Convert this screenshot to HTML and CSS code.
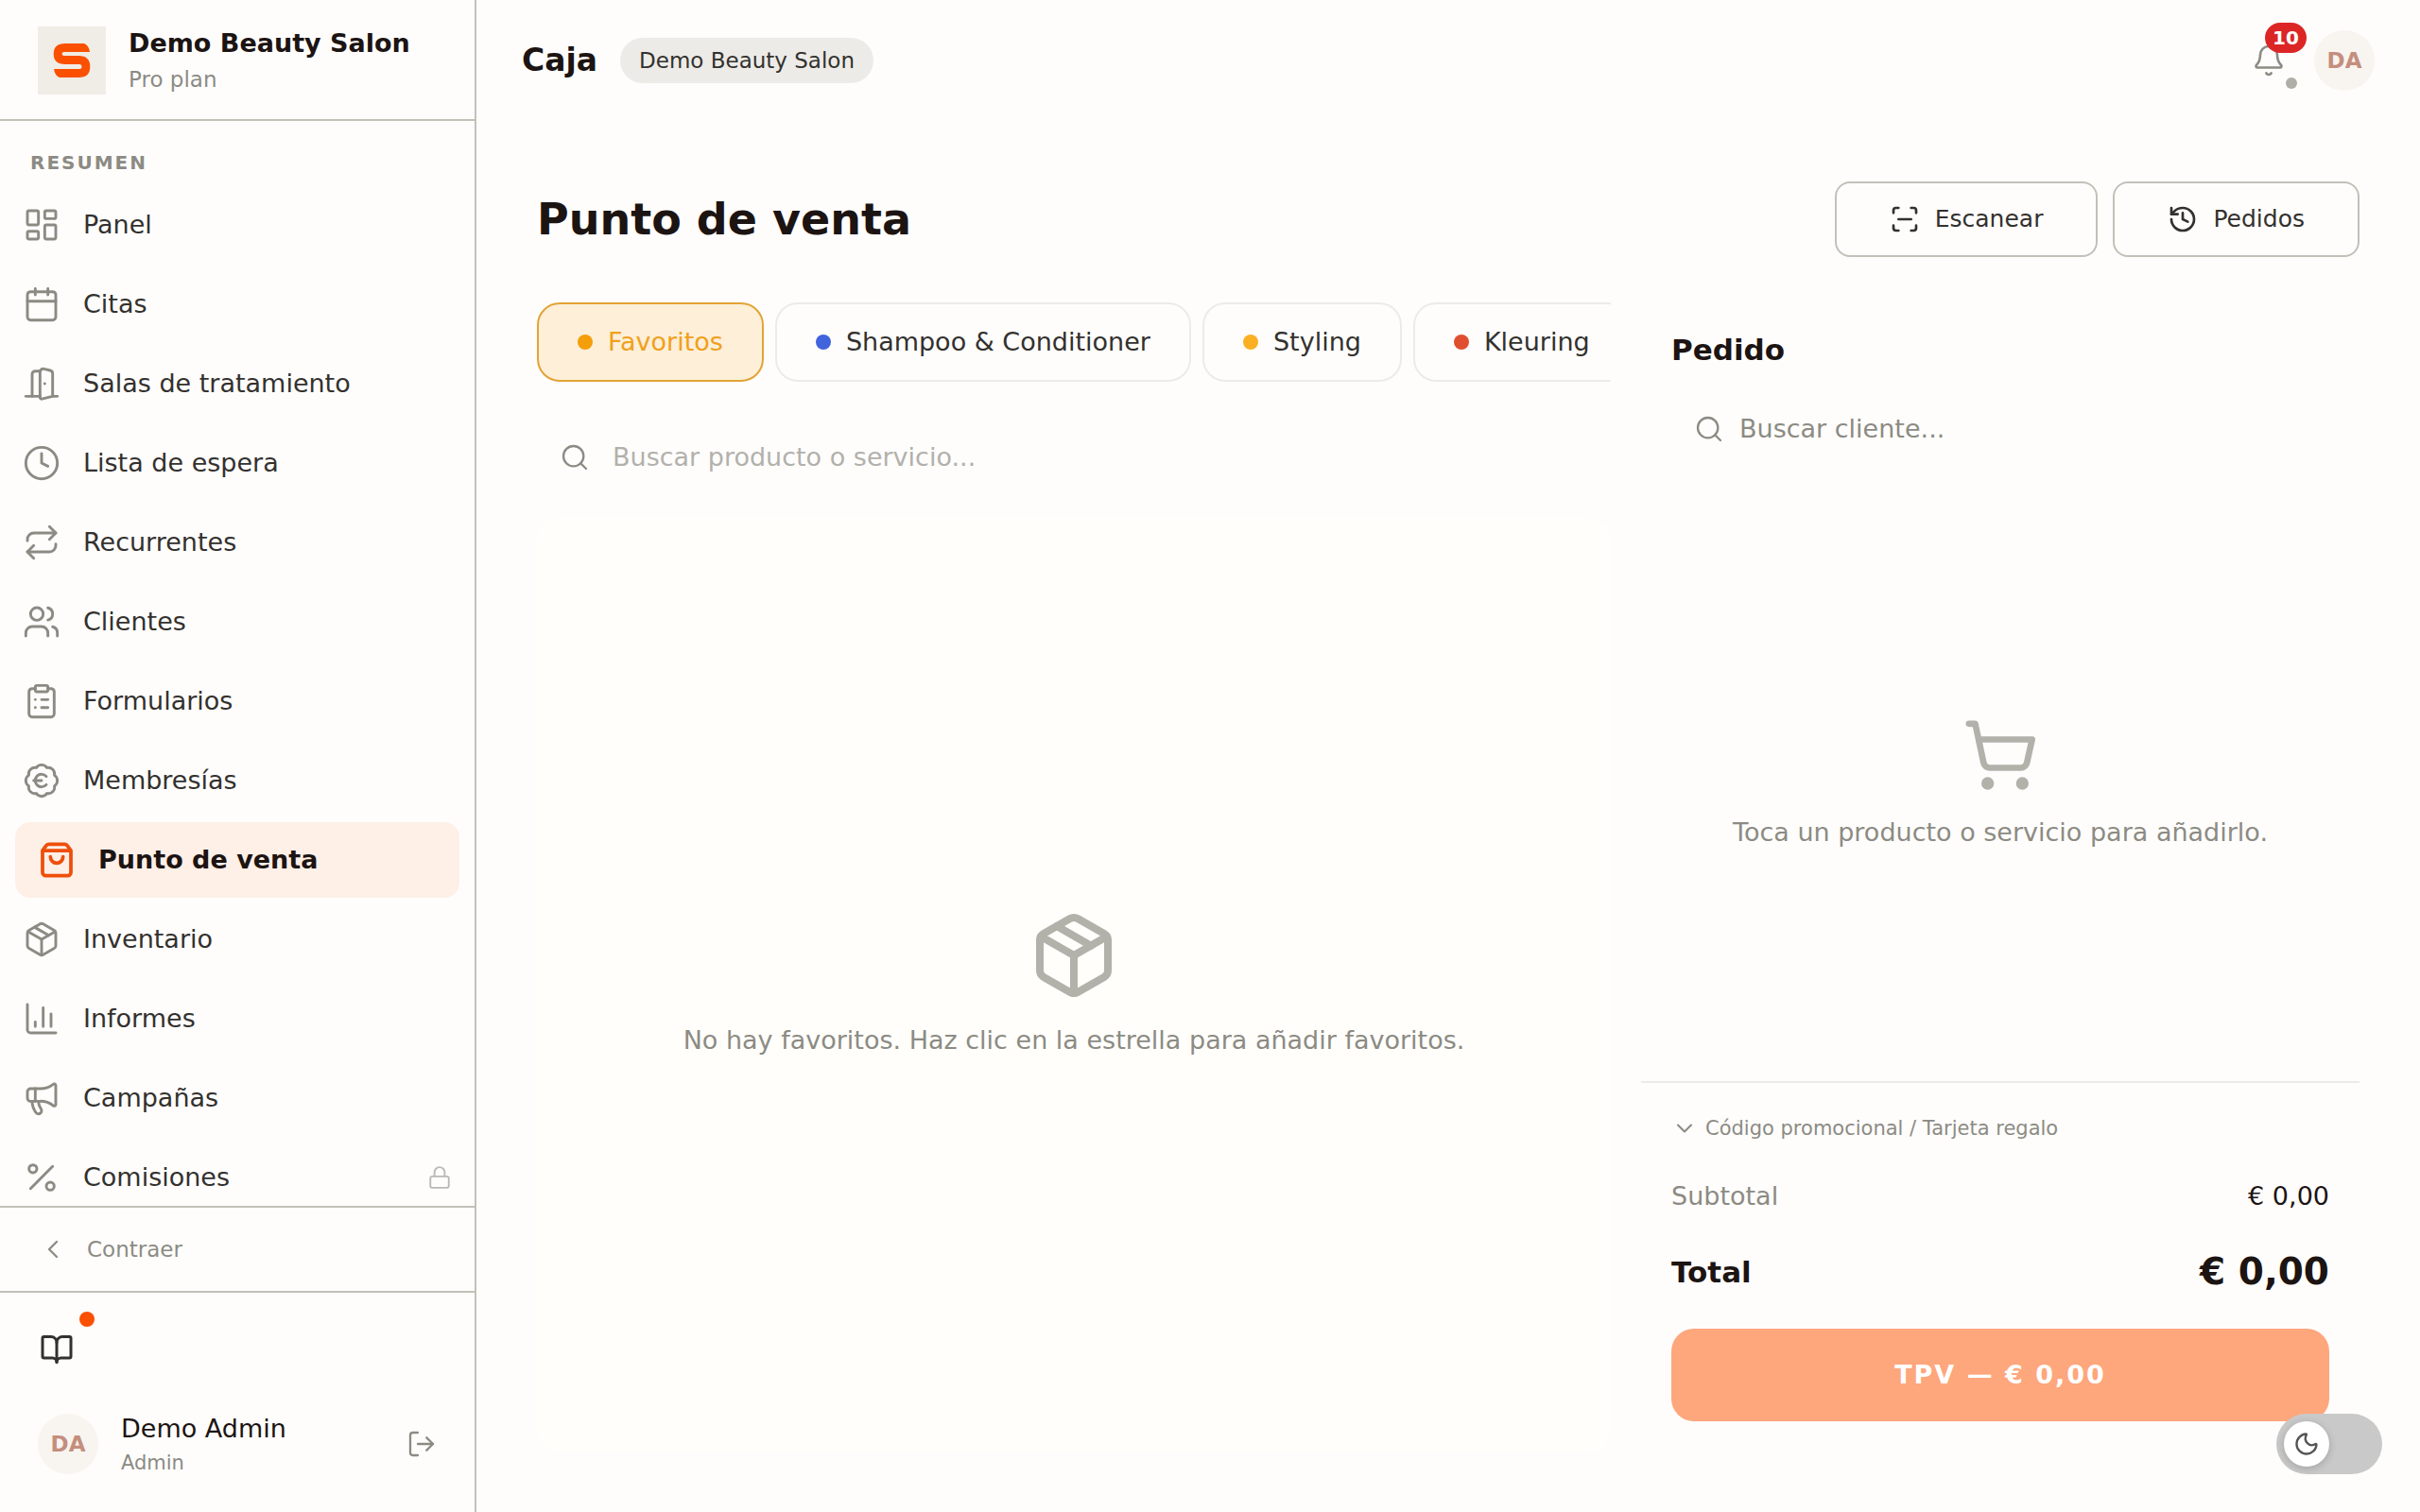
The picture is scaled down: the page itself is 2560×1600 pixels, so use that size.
FILE: index.html
```html
<!DOCTYPE html>
<html lang="es">
<head>
    <meta charset="UTF-8">
    <meta name="viewport" content="width=device-width, initial-scale=1.0">
    <title>Caja - Demo Beauty Salon</title>
    <link rel="stylesheet" href="styles.css">
</head>
<body>
    <aside class="sidebar">
        <div class="brand">
            <svg class="brand-logo" viewBox="0 0 72 72" aria-hidden="true">
                <rect width="72" height="72" fill="#f0ede6"/>
                <path fill="#fa5000" d="M29 18H49Q54 20 55 27H28Q25.500 27 25.500 29T28 31H43Q55.300 31 55.300 42.500T43 54H23Q18 52 17 45H44Q46.500 45 46.500 42.500T44 40H29Q16.700 40 16.700 29T29 18Z"/>
            </svg>
            <div>
                <div class="brand-name">Demo Beauty Salon</div>
                <div class="brand-plan">Pro plan</div>
            </div>
        </div>

        <nav class="nav">
            <h2 class="nav-heading">Resumen</h2>
            <ul class="nav-list">
                <li><a class="nav-item" href="#">
                    <svg class="icon" viewBox="0 0 24 24"><rect width="7" height="9" x="3" y="3" rx="1"/><rect width="7" height="5" x="14" y="3" rx="1"/><rect width="7" height="9" x="14" y="12" rx="1"/><rect width="7" height="5" x="3" y="16" rx="1"/></svg>
                    <span>Panel</span>
                </a></li>
                <li><a class="nav-item" href="#">
                    <svg class="icon" viewBox="0 0 24 24"><path d="M8 2v4M16 2v4M3 10h18"/><rect width="18" height="18" x="3" y="4" rx="2"/></svg>
                    <span>Citas</span>
                </a></li>
                <li><a class="nav-item" href="#">
                    <svg class="icon" viewBox="0 0 24 24"><path d="M11 20H2"/><path d="M11 4.562v16.157a1 1 0 0 0 1.242.97L19 20V5.562a2 2 0 0 0-1.515-1.94l-4-1A2 2 0 0 0 11 4.561z"/><path d="M11 4H8a2 2 0 0 0-2 2v14"/><path d="M14 12h.01"/><path d="M22 20h-3"/></svg>
                    <span>Salas de tratamiento</span>
                </a></li>
                <li><a class="nav-item" href="#">
                    <svg class="icon" viewBox="0 0 24 24"><circle cx="12" cy="12" r="10"/><path d="M12 6v6l4 2"/></svg>
                    <span>Lista de espera</span>
                </a></li>
                <li><a class="nav-item" href="#">
                    <svg class="icon" viewBox="0 0 24 24"><path d="m17 2 4 4-4 4"/><path d="M3 11v-1a4 4 0 0 1 4-4h14"/><path d="m7 22-4-4 4-4"/><path d="M21 13v1a4 4 0 0 1-4 4H3"/></svg>
                    <span>Recurrentes</span>
                </a></li>
                <li><a class="nav-item" href="#">
                    <svg class="icon" viewBox="0 0 24 24"><path d="M16 21v-2a4 4 0 0 0-4-4H6a4 4 0 0 0-4 4v2"/><path d="M16 3.128a4 4 0 0 1 0 7.744"/><path d="M22 21v-2a4 4 0 0 0-3-3.87"/><circle cx="9" cy="7" r="4"/></svg>
                    <span>Clientes</span>
                </a></li>
                <li><a class="nav-item" href="#">
                    <svg class="icon" viewBox="0 0 24 24"><rect width="8" height="4" x="8" y="2" rx="1"/><path d="M16 4h2a2 2 0 0 1 2 2v14a2 2 0 0 1-2 2H6a2 2 0 0 1-2-2V6a2 2 0 0 1 2-2h2"/><path d="M12 11h4M12 16h4M8 11h.01M8 16h.01"/></svg>
                    <span>Formularios</span>
                </a></li>
                <li><a class="nav-item" href="#">
                    <svg class="icon" viewBox="0 0 24 24"><path d="M3.85 8.62a4 4 0 0 1 4.78-4.77 4 4 0 0 1 6.74 0 4 4 0 0 1 4.78 4.78 4 4 0 0 1 0 6.74 4 4 0 0 1-4.77 4.78 4 4 0 0 1-6.75 0 4 4 0 0 1-4.78-4.77 4 4 0 0 1 0-6.76Z"/><path d="M7 12h5"/><path d="M15 9.400a4 4 0 1 0 0 5.200"/></svg>
                    <span>Membresías</span>
                </a></li>
                <li><a class="nav-item active" href="#" aria-current="page">
                    <svg class="icon" viewBox="0 0 24 24"><path d="M16 10a4 4 0 0 1-8 0"/><path d="M3.103 6.034h17.794"/><path d="M3.400 5.467a2 2 0 0 0-.4 1.200V20a2 2 0 0 0 2 2h14a2 2 0 0 0 2-2V6.667a2 2 0 0 0-.4-1.200l-2-2.667A2 2 0 0 0 17 2H7a2 2 0 0 0-1.600.800z"/></svg>
                    <span>Punto de venta</span>
                </a></li>
                <li><a class="nav-item" href="#">
                    <svg class="icon" viewBox="0 0 24 24"><path d="M11 21.730a2 2 0 0 0 2 0l7-4A2 2 0 0 0 21 16V8a2 2 0 0 0-1-1.730l-7-4a2 2 0 0 0-2 0l-7 4A2 2 0 0 0 3 8v8a2 2 0 0 0 1 1.730z"/><path d="M12 22V12"/><path d="M3.290 7 12 12l8.710-5"/><path d="m7.500 4.270 9 5.150"/></svg>
                    <span>Inventario</span>
                </a></li>
                <li><a class="nav-item" href="#">
                    <svg class="icon" viewBox="0 0 24 24"><path d="M3 3v16a2 2 0 0 0 2 2h16"/><path d="M18 17V9M13 17V5M8 17v-3"/></svg>
                    <span>Informes</span>
                </a></li>
                <li><a class="nav-item" href="#">
                    <svg class="icon" viewBox="0 0 24 24"><path d="M11 6a13 13 0 0 0 8.400-2.800A1 1 0 0 1 21 4v12a1 1 0 0 1-1.600.8A13 13 0 0 0 11 14H5a2 2 0 0 1-2-2V8a2 2 0 0 1 2-2z"/><path d="M6 14a12 12 0 0 0 2.400 7.200 2 2 0 0 0 3.200-2.400A8 8 0 0 1 10 14"/><path d="M8 6v8"/></svg>
                    <span>Campañas</span>
                </a></li>
                <li><a class="nav-item" href="#">
                    <svg class="icon" viewBox="0 0 24 24"><path d="M19 5 5 19"/><circle cx="6.500" cy="6.500" r="2.500"/><circle cx="17.500" cy="17.500" r="2.500"/></svg>
                    <span>Comisiones</span>
                    <svg class="icon nav-lock" viewBox="0 0 24 24"><rect width="18" height="11" x="3" y="11" rx="2"/><path d="M7 11V7a5 5 0 0 1 10 0v4"/></svg>
                </a></li>
            </ul>
        </nav>

        <button class="collapse-btn" type="button">
            <svg class="icon icon-md" viewBox="0 0 24 24"><path d="m15 18-6-6 6-6"/></svg>
            Contraer
        </button>

        <div class="sidebar-footer">
            <button class="icon-btn guide-btn" type="button" aria-label="Guía">
                <svg class="icon" viewBox="0 0 24 24"><path d="M12 7v14"/><path d="M3 18a1 1 0 0 1-1-1V4a1 1 0 0 1 1-1h5a4 4 0 0 1 4 4 4 4 0 0 1 4-4h5a1 1 0 0 1 1 1v13a1 1 0 0 1-1 1h-6a3 3 0 0 0-3 3 3 3 0 0 0-3-3z"/></svg>
                <span class="guide-dot"></span>
            </button>
            <div class="user">
                <span class="avatar">DA</span>
                <div class="user-info">
                    <div class="user-name">Demo Admin</div>
                    <div class="user-role">Admin</div>
                </div>
                <button class="icon-btn" type="button" aria-label="Cerrar sesión">
                    <svg class="icon icon-md" viewBox="0 0 24 24"><path d="m16 17 5-5-5-5"/><path d="M21 12H9"/><path d="M9 21H5a2 2 0 0 1-2-2V5a2 2 0 0 1 2-2h4"/></svg>
                </button>
            </div>
        </div>
    </aside>

    <div class="main">
        <header class="topbar">
            <span class="topbar-title">Caja</span>
            <span class="salon-pill">Demo Beauty Salon</span>
            <div class="topbar-actions">
                <button class="icon-btn bell-btn" type="button" aria-label="Notificaciones">
                    <svg class="icon" viewBox="0 0 24 24"><path d="M10.268 21a2 2 0 0 0 3.464 0"/><path d="M3.262 15.326A1 1 0 0 0 4 17h16a1 1 0 0 0 .74-1.673C19.410 13.956 18 12.499 18 8A6 6 0 0 0 6 8c0 4.499-1.411 5.956-2.738 7.326"/></svg>
                    <span class="bell-badge">10</span>
                    <span class="bell-status"></span>
                </button>
                <span class="avatar">DA</span>
            </div>
        </header>

        <main class="page">
            <div class="page-header">
                <h1>Punto de venta</h1>
                <div class="page-actions">
                    <button class="outline-btn" type="button">
                        <svg class="icon icon-md" viewBox="0 0 24 24"><path d="M3 7V5a2 2 0 0 1 2-2h2"/><path d="M17 3h2a2 2 0 0 1 2 2v2"/><path d="M21 17v2a2 2 0 0 1-2 2h-2"/><path d="M7 21H5a2 2 0 0 1-2-2v-2"/><path d="M7 12h10"/></svg>
                        Escanear
                    </button>
                    <button class="outline-btn" type="button">
                        <svg class="icon icon-md" viewBox="0 0 24 24"><path d="M3 12a9 9 0 1 0 9-9 9.750 9.750 0 0 0-6.740 2.740L3 8"/><path d="M3 3v5h5"/><path d="M12 7v5l4 2"/></svg>
                        Pedidos
                    </button>
                </div>
            </div>

            <div class="pos">
                <section class="catalog">
                    <div class="tabs">
                        <button class="tab selected" type="button"><span class="dot dot-amber"></span>Favoritos</button>
                        <button class="tab" type="button"><span class="dot dot-blue"></span>Shampoo &amp; Conditioner</button>
                        <button class="tab" type="button"><span class="dot dot-yellow"></span>Styling</button>
                        <button class="tab" type="button"><span class="dot dot-red"></span>Kleuring</button>
                    </div>

                    <label class="search product-search">
                        <svg class="icon icon-md" viewBox="0 0 24 24"><path d="m21 21-4.340-4.340"/><circle cx="11" cy="11" r="8"/></svg>
                        <input type="text" placeholder="Buscar producto o servicio..." aria-label="Buscar producto o servicio">
                    </label>

                    <div class="empty products-empty">
                        <svg class="icon" viewBox="0 0 24 24"><path d="M11 21.730a2 2 0 0 0 2 0l7-4A2 2 0 0 0 21 16V8a2 2 0 0 0-1-1.730l-7-4a2 2 0 0 0-2 0l-7 4A2 2 0 0 0 3 8v8a2 2 0 0 0 1 1.730z"/><path d="M12 22V12"/><path d="M3.290 7 12 12l8.710-5"/><path d="m7.500 4.270 9 5.150"/></svg>
                        <p>No hay favoritos. Haz clic en la estrella para añadir favoritos.</p>
                    </div>
                </section>

                <section class="order">
                    <div class="order-head">
                        <h2>Pedido</h2>
                        <label class="search client-search">
                            <svg class="icon icon-md" viewBox="0 0 24 24"><path d="m21 21-4.340-4.340"/><circle cx="11" cy="11" r="8"/></svg>
                            <input type="text" placeholder="Buscar cliente..." aria-label="Buscar cliente">
                        </label>
                    </div>

                    <div class="empty order-empty">
                        <svg class="icon" viewBox="0 0 24 24"><circle cx="8" cy="21" r="1"/><circle cx="19" cy="21" r="1"/><path d="M2.050 2.050h2l2.660 12.420a2 2 0 0 0 2 1.580h9.780a2 2 0 0 0 1.950-1.570l1.650-7.430H5.120"/></svg>
                        <p>Toca un producto o servicio para añadirlo.</p>
                    </div>

                    <div class="order-summary">
                        <button class="promo-btn" type="button">
                            <svg class="icon" viewBox="0 0 24 24"><path d="m6 9 6 6 6-6"/></svg>
                            Código promocional / Tarjeta regalo
                        </button>
                        <div class="subtotal-row">
                            <span>Subtotal</span>
                            <span class="subtotal-value">€ 0,00</span>
                        </div>
                        <div class="total-row">
                            <span>Total</span>
                            <span class="total-value">€ 0,00</span>
                        </div>
                        <button class="pay-btn" type="button" disabled>TPV — € 0,00</button>
                    </div>
                </section>
            </div>
        </main>
    </div>

    <label class="theme-toggle">
        <input type="checkbox" role="switch" aria-label="Modo oscuro">
        <span class="theme-knob">
            <svg class="icon" viewBox="0 0 24 24"><path d="M20.985 12.486a9 9 0 1 1-9.473-9.472c.405-.022.617.460.402.803a6 6 0 0 0 8.268 8.268c.344-.215.825-.004.803.401"/></svg>
        </span>
    </label>
</body>
</html>
```

FILE: styles.css
```css
* {
    box-sizing: border-box;
}

body {
    margin: 0;
    display: flex;
    height: 100vh;
    overflow: hidden;
    background-color: #fefdfc;
    color: #1c1412;
    font-family: "DejaVu Sans", sans-serif;
    font-size: 27px;
    line-height: 40px;
}

h1, h2, p, ul {
    margin: 0;
    padding: 0;
}

button {
    border: none;
    padding: 0;
    background: none;
    color: inherit;
    font: inherit;
    cursor: pointer;
}

/* Icons */
.icon {
    width: 40px;
    height: 40px;
    flex-shrink: 0;
    fill: none;
    stroke: currentColor;
    stroke-width: 1.75;
    stroke-linecap: round;
    stroke-linejoin: round;
}

.icon-md {
    width: 32px;
    height: 32px;
}

.icon-btn {
    position: relative;
    width: 80px;
    height: 80px;
    display: flex;
    align-items: center;
    justify-content: center;
    color: #8c8b83;
}

.avatar {
    width: 64px;
    height: 64px;
    flex-shrink: 0;
    display: flex;
    align-items: center;
    justify-content: center;
    border-radius: 50%;
    background-color: #f8f4f0;
    color: #c48e7e;
    font-size: 23px;
    font-weight: bold;
}

/* Sidebar */
.sidebar {
    width: 504px;
    flex-shrink: 0;
    display: flex;
    flex-direction: column;
    border-right: 2px solid #c2c1b8;
}

.brand {
    height: 128px;
    flex-shrink: 0;
    display: flex;
    align-items: center;
    gap: 24px;
    padding: 2px 40px 0;
    border-bottom: 2px solid #c2c1b8;
}

.brand-logo {
    width: 72px;
    height: 72px;
}

.brand-name {
    font-weight: bold;
}

.brand-plan {
    color: #8c8b83;
    font-size: 23px;
    line-height: 36px;
}

.nav {
    flex: 1;
    min-height: 0;
    overflow: hidden;
    padding-top: 28px;
}

.nav-heading {
    margin-bottom: 10px;
    padding: 0 32px;
    color: #8c8b83;
    font-size: 20px;
    line-height: 32px;
    letter-spacing: 2px;
    text-transform: uppercase;
}

.nav-list {
    display: flex;
    flex-direction: column;
    gap: 4px;
    list-style: none;
}

.nav-item {
    height: 80px;
    display: flex;
    align-items: center;
    gap: 24px;
    padding: 0 24px;
    color: #33312e;
    text-decoration: none;
}

.nav-item .icon {
    color: #8c8b83;
}

.nav-item.active {
    margin: 0 16px;
    border-radius: 16px;
    background-color: #feefe7;
    color: #1c1412;
    font-weight: bold;
}

.nav-item.active .icon {
    color: #ee4f0a;
    stroke-width: 2.25;
}

.nav-item .nav-lock {
    width: 26px;
    height: 26px;
    margin-left: auto;
    color: #bab9b3;
}

.collapse-btn {
    height: 90px;
    flex-shrink: 0;
    display: flex;
    align-items: center;
    gap: 20px;
    padding: 0 40px;
    border-top: 2px solid #c2c1b8;
    color: #8c8b83;
    font-size: 23px;
}

.sidebar-footer {
    flex-shrink: 0;
    padding: 20px 16px 32px 20px;
    border-top: 2px solid #c2c1b8;
}

.guide-btn {
    color: #33312e;
}

.guide-btn .icon {
    width: 36px;
    height: 36px;
    stroke-width: 2;
}

.guide-dot {
    position: absolute;
    top: 0;
    right: 0;
    width: 16px;
    height: 16px;
    border-radius: 50%;
    background-color: #fa5000;
}

.user {
    display: flex;
    align-items: center;
    gap: 24px;
    margin-top: 20px;
    padding-left: 20px;
}

.user-info {
    flex: 1;
}

.user-role {
    color: #8c8b83;
    font-size: 21px;
    line-height: 32px;
}

/* Top bar */
.main {
    flex: 1;
    min-width: 0;
    display: flex;
    flex-direction: column;
}

.topbar {
    height: 128px;
    flex-shrink: 0;
    display: flex;
    align-items: center;
    gap: 24px;
    padding: 0 48px;
}

.topbar-title {
    font-size: 33px;
    font-weight: bold;
}

.salon-pill {
    height: 48px;
    padding: 0 20px;
    border-radius: 24px;
    background-color: #ecebe7;
    color: #33312e;
    font-size: 23px;
    line-height: 48px;
}

.topbar-actions {
    display: flex;
    align-items: center;
    gap: 8px;
    margin-left: auto;
}

.bell-btn .icon {
    width: 36px;
    height: 36px;
}

.bell-badge {
    position: absolute;
    top: 0;
    right: 0;
    width: 44px;
    height: 32px;
    border-radius: 16px;
    background-color: #dc2626;
    color: #fff;
    font-size: 20px;
    font-weight: bold;
    line-height: 32px;
    text-align: center;
}

.bell-status {
    position: absolute;
    right: 10px;
    bottom: 10px;
    width: 12px;
    height: 12px;
    border-radius: 50%;
    background-color: #afaea7;
}

/* Page */
.page {
    flex: 1;
    min-height: 0;
    display: flex;
    flex-direction: column;
    gap: 48px;
    padding: 64px;
}

.page-header {
    display: flex;
    align-items: center;
    justify-content: space-between;
}

h1 {
    font-size: 46px;
    line-height: 56px;
}

.page-actions {
    display: flex;
    gap: 16px;
}

.outline-btn {
    height: 80px;
    display: flex;
    align-items: center;
    gap: 16px;
    padding: 0 56px;
    border: 2px solid #c2c1b8;
    border-radius: 16px;
    color: #33312e;
    font-size: 25px;
}

.outline-btn .icon {
    stroke-width: 2;
}

.pos {
    flex: 1;
    min-height: 0;
    display: grid;
    grid-template-columns: minmax(0, 1fr) 760px;
    gap: 32px;
}

.catalog {
    display: flex;
    flex-direction: column;
}

.tabs {
    display: flex;
    gap: 12px;
    overflow: hidden;
}

.tab {
    height: 84px;
    flex-shrink: 0;
    display: flex;
    align-items: center;
    gap: 16px;
    padding: 0 41px;
    border: 2px solid #ecebe8;
    border-radius: 24px;
    color: #33312e;
    white-space: nowrap;
}

.tab.selected {
    border-color: #e2a336;
    background-color: #fdefd8;
    color: #f0a01c;
}

.dot {
    width: 16px;
    height: 16px;
    border-radius: 50%;
}

.dot-amber {
    background-color: #f59e0b;
}

.dot-blue {
    background-color: #4064dc;
}

.dot-yellow {
    background-color: #fbb024;
}

.dot-red {
    background-color: #e04e30;
}

.search {
    display: flex;
    align-items: center;
    color: #8c8b83;
}

.search input {
    flex: 1;
    min-width: 0;
    border: none;
    padding: 0;
    outline: none;
    background: none;
    color: #1c1412;
    font: inherit;
}

.search input::placeholder {
    color: #8c8b83;
    opacity: 1;
}

.product-search {
    height: 96px;
    gap: 24px;
    margin: 32px 0 16px;
    padding: 0 24px;
}

.product-search input::placeholder {
    color: #b2b1ab;
}

.empty {
    flex: 1;
    display: flex;
    flex-direction: column;
    align-items: center;
    justify-content: center;
    gap: 22px;
    color: #8c8b83;
    text-align: center;
}

.empty .icon {
    color: #b2b1aa;
    stroke-width: 2;
}

.products-empty {
    border-radius: 24px;
    background-color: #fffefb;
}

.products-empty .icon {
    width: 96px;
    height: 96px;
}

/* Order panel */
.order {
    display: flex;
    flex-direction: column;
}

.order-head {
    padding: 30px 32px 22px;
}

.order-head h2 {
    margin-bottom: 24px;
    font-size: 31px;
}

.client-search {
    height: 80px;
    gap: 16px;
    padding: 0 24px;
}

.order-empty .icon {
    width: 80px;
    height: 80px;
}

.order-summary {
    display: flex;
    flex-direction: column;
    padding: 28px 32px 32px;
    border-top: 2px solid #ecebe8;
}

.promo-btn {
    display: flex;
    align-items: center;
    gap: 8px;
    color: #8c8b83;
    font-size: 21px;
}

.promo-btn .icon {
    width: 28px;
    height: 28px;
}

.subtotal-row,
.total-row {
    display: flex;
    align-items: center;
    justify-content: space-between;
}

.subtotal-row {
    margin-top: 32px;
    color: #8c8b83;
}

.subtotal-value {
    color: #1c1412;
}

.total-row {
    margin-top: 32px;
    font-size: 31px;
    font-weight: bold;
    line-height: 56px;
}

.total-value {
    font-size: 39px;
}

.pay-btn {
    height: 98px;
    margin-top: 32px;
    border-radius: 24px;
    background-color: #fea67c;
    color: #fff;
    font-weight: bold;
    letter-spacing: 2px;
}

/* Floating dark mode switch */
.theme-toggle {
    position: fixed;
    right: 40px;
    bottom: 40px;
    width: 112px;
    height: 64px;
    padding: 8px;
    border-radius: 32px;
    background-color: #c9c9c9;
    cursor: pointer;
}

.theme-toggle input {
    position: absolute;
    inset: 0;
    width: 100%;
    height: 100%;
    margin: 0;
    opacity: 0;
}

.theme-knob {
    width: 48px;
    height: 48px;
    display: flex;
    align-items: center;
    justify-content: center;
    border-radius: 50%;
    background-color: #fff;
    color: #555;
    box-shadow: 0 2px 8px rgba(0, 0, 0, 0.2);
}

.theme-knob .icon {
    width: 28px;
    height: 28px;
    stroke-width: 2;
}
```
